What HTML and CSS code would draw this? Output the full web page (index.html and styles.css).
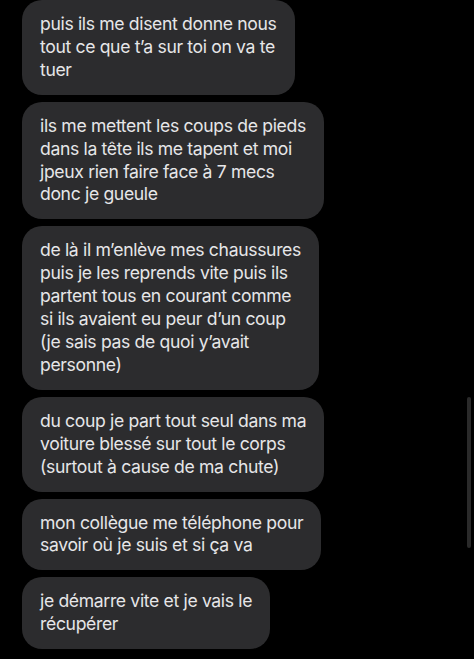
FILE: index.html
```html
<!DOCTYPE html>
<html lang="fr">
<head>
<meta charset="utf-8">
<link rel="stylesheet" href="styles.css">
</head>
<body>
<div class="thread">
  <div class="bubble">puis ils me disent donne nous<br>tout ce que t’a sur toi on va te<br>tuer</div>
  <div class="bubble">ils me mettent les coups de pieds<br>dans la tête ils me tapent et moi<br>jpeux rien faire face à 7 mecs<br>donc je gueule</div>
  <div class="bubble">de là il m’enlève mes chaussures<br>puis je les reprends vite puis ils<br>partent tous en courant comme<br>si ils avaient eu peur d’un coup<br>(je sais pas de quoi y’avait<br>personne)</div>
  <div class="bubble">du coup je part tout seul dans ma<br>voiture blessé sur tout le corps<br>(surtout à cause de ma chute)</div>
  <div class="bubble">mon collègue me téléphone pour<br>savoir où je suis et si ça va</div>
  <div class="bubble">je démarre vite et je vais le<br>récupérer</div>
</div>
<div class="scrollbar"></div>
</body>
</html>
```
FILE: styles.css
```css
html, body {
  margin: 0;
  padding: 0;
  background: #000;
  height: 100%;
  overflow: hidden;
}
body {
  font-family: "Inter", "Roboto", sans-serif;
  color: #e6e6e8;
}
.thread {
  display: flex;
  flex-direction: column;
  align-items: flex-start;
  gap: 7px;
  padding: 0 0 0 22px;
}
.bubble {
  background: #2c2c2e;
  border-radius: 20px;
  padding: 13px 18px 13px 18px;
  font-size: 17.6px;
  line-height: 22.9px;
  white-space: nowrap;
  letter-spacing: -0.35px;
}
.scrollbar {
  position: absolute;
  left: 467px;
  top: 397px;
  width: 4px;
  height: 151px;
  border-radius: 2px;
  background: #2a2a2a;
}
```
